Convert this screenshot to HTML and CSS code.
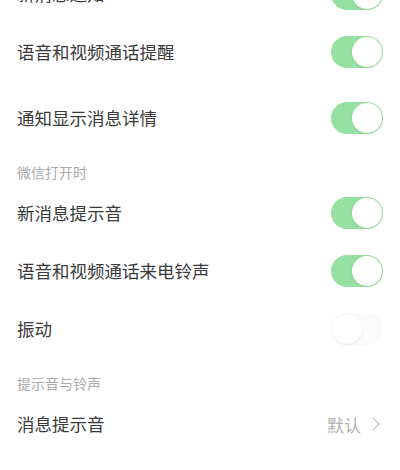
FILE: index.html
```html
<!DOCTYPE html>
<html lang="zh-CN">
<head>
  <meta charset="UTF-8" />
  <meta name="viewport" content="width=device-width, initial-scale=1.0"/>
  <title>新消息通知</title>
  <link rel="stylesheet" href="styles.css">
</head>
<body>

  <div class="settings">
    <div class="row">
      <span class="label">新消息通知</span>
      <span class="switch on"><span class="knob"></span></span>
    </div>
    <div class="row">
      <span class="label">语音和视频通话提醒</span>
      <span class="switch on"><span class="knob"></span></span>
    </div>
    <div class="row spaced">
      <span class="label">通知显示消息详情</span>
      <span class="switch on"><span class="knob"></span></span>
    </div>

    <div class="section">微信打开时</div>
    <div class="row">
      <span class="label">新消息提示音</span>
      <span class="switch on"><span class="knob"></span></span>
    </div>
    <div class="row">
      <span class="label">语音和视频通话来电铃声</span>
      <span class="switch on"><span class="knob"></span></span>
    </div>
    <div class="row">
      <span class="label">振动</span>
      <span class="switch"><span class="knob"></span></span>
    </div>

    <div class="section">提示音与铃声</div>
    <div class="row">
      <span class="label">消息提示音</span>
      <span class="value">默认
        <svg class="chevron" width="8" height="14" viewBox="0 0 8 14">
          <path d="M1 1 L7 7 L1 13" fill="none" stroke="#c8c8c8" stroke-width="1.2"/>
        </svg>
      </span>
    </div>
  </div>

</body>
</html>
```

FILE: styles.css
```css
body {
  margin: 0;
  background: #fff;
  font-family: "Noto Sans CJK SC", "Noto Sans", sans-serif;
  color: #3a3a3a;
  overflow: hidden;
}

/* list is scrolled a bit, first row is half hidden */
.settings {
  margin-top: -35px;
}

.row {
  height: 58px;
  display: flex;
  align-items: center;
  justify-content: space-between;
  padding: 0 17px;
}

.row.spaced {
  margin-top: 8px;
}

.label {
  font-size: 17.5px;
  line-height: 24px;
}

.section {
  padding: 16px 17px 3px;
  font-size: 14px;
  line-height: 18px;
  color: #aaa;
}

.switch {
  width: 52px;
  height: 32px;
  box-sizing: border-box;
  padding: 1px;
  border-radius: 16px;
  background: #fafafa;
  display: flex;
  justify-content: flex-start;
}

.switch.on {
  background: #96e0a1;
  justify-content: flex-end;
}

.knob {
  width: 30px;
  height: 30px;
  border-radius: 50%;
  background: #fff;
  box-shadow: 0 1px 3px rgba(0,0,0,0.08);
}

.value {
  display: flex;
  align-items: center;
  gap: 11px;
  font-size: 17px;
  color: #b0b0b0;
  padding-right: 3px;
}
```
